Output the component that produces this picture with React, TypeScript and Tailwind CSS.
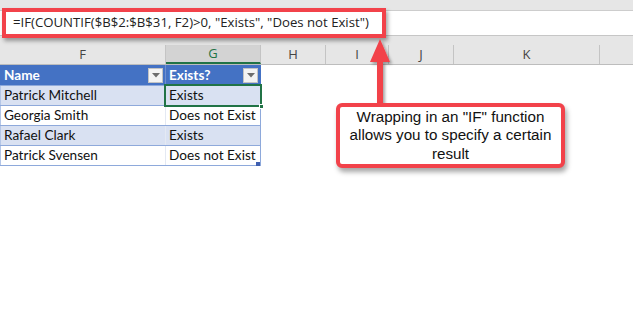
import React from 'react';

const rows = [
  { name: 'Patrick Mitchell', exists: 'Exists', band: true },
  { name: 'Georgia Smith', exists: 'Does not Exist', band: false },
  { name: 'Rafael Clark', exists: 'Exists', band: true },
  { name: 'Patrick Svensen', exists: 'Does not Exist', band: false },
];

const columns = [
  { label: 'F', w: 'w-[166px]' },
  { label: 'G', w: 'w-[95px]', selected: true },
  { label: 'H', w: 'w-[65px]' },
  { label: 'I', w: 'w-[63px]' },
  { label: 'J', w: 'w-[65px]' },
  { label: 'K', w: 'w-[146px]' },
];

const FilterButton = () => (
  <div className="w-[15px] h-[15px] bg-[#f3f3f3] border border-[#c3c3c3] flex items-center justify-center">
    <svg width="8" height="5" viewBox="0 0 8 5">
      <path d="M0 0 L8 0 L4 4.5 Z" fill="#6d6d6d" />
    </svg>
  </div>
);

export default function App() {
  return (
    <div className="relative w-[633px] h-[310px] overflow-hidden bg-white font-['Open_Sans',sans-serif]">
      {/* ribbon strip + formula bar */}
      <div className="h-[11px] bg-[#e6e6e6] border-b border-[#cdcdcd]" />
      <div className="h-[25px] bg-white border-b border-[#c6c6c6] flex items-center pl-[13px] text-[13.2px] text-[#222]">
        =IF(COUNTIF($B$2:$B$31, F2)&gt;0, "Exists", "Does not Exist")
      </div>
      <div className="h-[9px] bg-[#e6e6e6]" />

      {/* column headers */}
      <div className="flex h-[20px] bg-[#e6e6e6] border-b border-[#bdbdbd]">
        {columns.map((c) => (
          <div
            key={c.label}
            className={`${c.w} shrink-0 flex items-center justify-center border-r border-[#c4c4c4] text-[13px] ${
              c.selected ? 'bg-[#d3d3d3] text-[#217346] border-b-2 border-b-[#217346]' : 'text-[#444]'
            }`}
          >
            {c.label}
          </div>
        ))}
        <div className="flex-1" />
      </div>

      {/* table */}
      <div className="relative w-[261px] font-['Lato',sans-serif] text-[13.6px] text-[#111]">
        <div className="flex h-[20px] bg-[#4472c4] text-white font-bold">
          <div className="w-[166px] shrink-0 flex items-center justify-between pl-[4px] pr-[2px] border-r border-[#6f8fd0]">
            <span>Name</span>
            <FilterButton />
          </div>
          <div className="w-[95px] shrink-0 flex items-center justify-between pl-[3px] pr-[2px] border-r border-[#4472c4]">
            <span>Exists?</span>
            <FilterButton />
          </div>
        </div>
        {rows.map((r) => (
          <div
            key={r.name}
            className={`flex h-[20px] border-t border-[#8ea9db] ${r.band ? 'bg-[#d9e1f2]' : 'bg-white'}`}
          >
            <div className="w-[166px] shrink-0 pl-[3px] leading-[19px] border-r border-[#e4e9f3] border-l border-l-[#b4c6e7]">
              {r.name}
            </div>
            <div className="w-[95px] shrink-0 pl-[3px] leading-[19px] border-r border-[#8ea9db] whitespace-nowrap overflow-hidden">
              {r.exists}
            </div>
          </div>
        ))}
        <div className="h-0 border-t border-[#8ea9db]" />

        {/* active cell */}
        <div className="absolute left-[164px] top-[19px] w-[98px] h-[23px] border-2 border-[#217346]">
          <div className="absolute -right-[4px] -bottom-[4px] w-[5px] h-[5px] bg-[#217346] border border-white" />
        </div>
        {/* table resize corner */}
        <div className="absolute left-[256px] top-[97px] w-[4px] h-[4px] bg-[#3f5fb0]" />
      </div>

      {/* red highlight on formula */}
      <div className="absolute left-[2px] top-[8px] w-[384px] h-[30px] border-4 border-[#f2424a] shadow-[2px_3px_4px_rgba(0,0,0,0.35)]" />

      {/* arrow */}
      <svg className="absolute left-[360px] top-[36px]" width="44" height="72" viewBox="0 0 44 72">
        <defs>
          <filter id="sh" x="-30%" y="-10%" width="160%" height="130%">
            <feDropShadow dx="2" dy="2" stdDeviation="1.5" floodColor="#000" floodOpacity="0.35" />
          </filter>
        </defs>
        <g filter="url(#sh)">
          <path d="M20 3 L30 26 L23 26 L23 68 L17 68 L17 26 L10 26 Z" fill="#f2424a" />
        </g>
      </svg>

      {/* callout */}
      <div className="absolute left-[336px] top-[103px] w-[229px] h-[65px] bg-white border-4 border-[#f2424a] rounded-[6px] shadow-[2px_4px_5px_rgba(0,0,0,0.35)] flex items-center justify-center text-center font-['Liberation_Sans',Arial,sans-serif] text-[15.2px] leading-[18.5px] text-[#111]">
        <p className="whitespace-nowrap">
          Wrapping in an "IF" function
          <br />
          allows you to specify a certain
          <br />
          result
        </p>
      </div>
    </div>
  );
}
